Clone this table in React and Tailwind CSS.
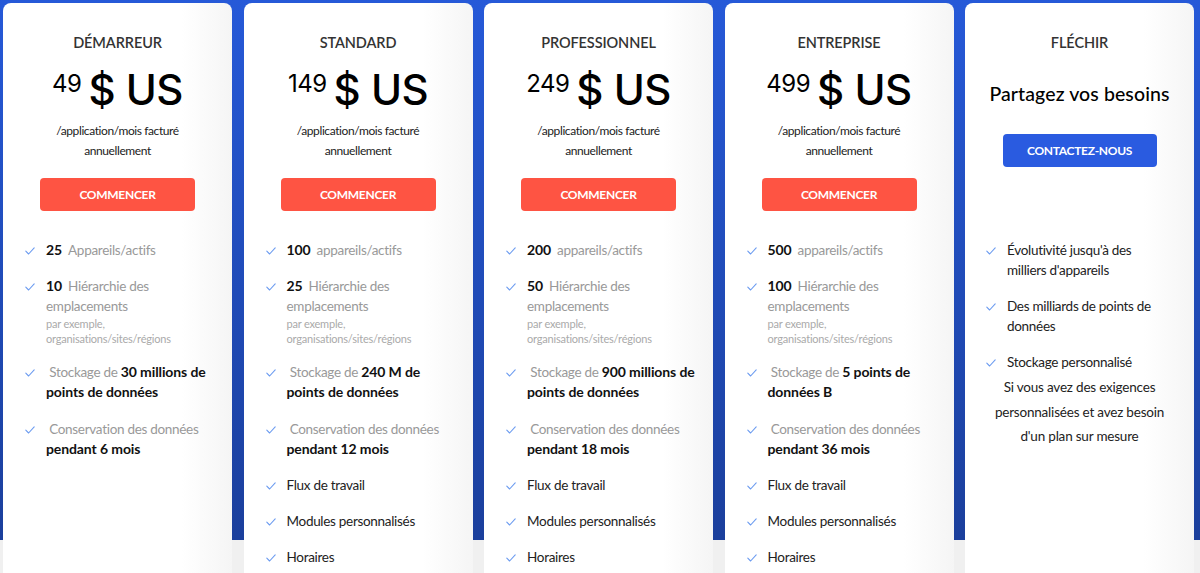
import React from "react";

const Check = () => (
  <svg width="10" height="8" viewBox="0 0 10 8" className="shrink-0 mt-[7px]" fill="none">
    <path d="M0.8 4.2 L3.6 7 L9.2 0.8" stroke="#6b9bf0" strokeWidth="1.1" strokeLinecap="round" strokeLinejoin="round" />
  </svg>
);

const Feature = ({ children }) => (
  <li className="flex gap-[11px] items-start">
    <Check />
    <div className="text-[13.5px] leading-[20px] tracking-[-0.3px]">{children}</div>
  </li>
);

const plans = [
  { name: "DÉMARREUR", price: "49", dev: "25", devLabel: "Appareils/actifs", loc: "10", stock: "30 millions de points de données", keep: "pendant 6 mois", extra: false },
  { name: "STANDARD", price: "149", dev: "100", devLabel: "appareils/actifs", loc: "25", stock: "240 M de points de données", keep: "pendant 12 mois", extra: true },
  { name: "PROFESSIONNEL", price: "249", dev: "200", devLabel: "appareils/actifs", loc: "50", stock: "900 millions de points de données", keep: "pendant 18 mois", extra: true },
  { name: "ENTREPRISE", price: "499", dev: "500", devLabel: "appareils/actifs", loc: "100", stock: "5 points de données B", keep: "pendant 36 mois", extra: true },
];

const cardCls =
  "w-[229px] shrink-0 rounded-t-[8px] bg-[linear-gradient(90deg,#ffffff_0%,#ffffff_78%,#f5f5f5_100%)] flex flex-col items-center pt-[30px]";

const Title = ({ children }) => (
  <div className="text-[14.5px] leading-[20px] font-semibold text-[#333] tracking-[-0.1px]">{children}</div>
);

const Bold = ({ children }) => (
  <span className="font-bold text-[#111] text-[14px] leading-[20px] tracking-[-0.1px]">{children}</span>
);

const PlanCard = ({ p }) => (
  <div className={cardCls}>
    <Title>{p.name}</Title>
    <div className="mt-[13px] flex items-start text-black leading-[48px]" style={{ fontFamily: "Inter, Lato, sans-serif" }}>
      <span className="text-[24px] leading-[30px] mt-[3px] mr-[7px] tracking-[-0.5px]">{p.price}</span>
      <span className="text-[42px] font-medium tracking-[-0.5px]">$ US</span>
    </div>
    <div className="mt-[7px] text-[12px] leading-[20px] tracking-[-0.4px] text-[#222] text-center w-[140px]">
      /application/mois facturé annuellement
    </div>
    <button className="mt-[17px] w-[155px] h-[33px] rounded-[4px] bg-[#fe5443] text-white text-[12px] font-bold tracking-[-0.3px]">
      COMMENCER
    </button>
    <ul className="mt-[29px] self-stretch pl-[22px] pr-[16px] flex flex-col gap-[16.2px]">
      <Feature>
        <span className="mr-[6px]"><Bold>{p.dev}</Bold></span>
        <span className="text-[#999]">{p.devLabel}</span>
      </Feature>
      <Feature>
        <span className="mr-[6px]"><Bold>{p.loc}</Bold></span>
        <span className="text-[#999]">Hiérarchie des emplacements</span>
        <div className="text-[11px] leading-[15px] tracking-[-0.2px] text-[#aaa]">par exemple, organisations/sites/régions</div>
      </Feature>
      <Feature>
        <span className="text-[#999]">{"\u00a0"}Stockage de </span>
        <Bold>{p.stock}</Bold>
      </Feature>
      <Feature>
        <span className="text-[#999]">{"\u00a0"}Conservation des données </span>
        <Bold>{p.keep}</Bold>
      </Feature>
      {p.extra && (
        <>
          <Feature><span className="text-[#222]">Flux de travail</span></Feature>
          <Feature><span className="text-[#222]">Modules personnalisés</span></Feature>
          <Feature><span className="text-[#222]">Horaires</span></Feature>
        </>
      )}
    </ul>
  </div>
);

export default function App() {
  return (
    <div
      className="h-[573px] w-[1200px] overflow-hidden bg-[linear-gradient(180deg,#2659d8_0px,#1b3f9c_540px,#f0f0f0_540px,#f0f0f0_100%)] pt-[3px] pl-[3px] flex gap-[11.5px] items-stretch"
      style={{ fontFamily: "Lato, 'Noto Sans', sans-serif" }}
    >
      {plans.map((p) => (
        <PlanCard key={p.name} p={p} />
      ))}
      <div className={cardCls}>
        <Title>FLÉCHIR</Title>
        <div className="mt-[29px] text-[19.5px] leading-[24px] font-medium text-black tracking-[0.1px]">Partagez vos besoins</div>
        <button className="mt-[28px] w-[154px] h-[33px] rounded-[4px] bg-[#2a5be0] text-white text-[12px] font-bold tracking-[-0.3px]">
          CONTACTEZ-NOUS
        </button>
        <ul className="mt-[73px] self-stretch pl-[21px] pr-[26px] flex flex-col gap-[16px]">
          <Feature><span className="text-[#222]">Évolutivité jusqu'à des milliers d'appareils</span></Feature>
          <Feature><span className="text-[#222]">Des milliards de points de données</span></Feature>
          <Feature><span className="text-[#222]">Stockage personnalisé</span></Feature>
        </ul>
        <p className="mt-[3px] px-[22px] text-center text-[13.5px] leading-[24.5px] tracking-[-0.2px] text-[#222]">
          Si vous avez des exigences personnalisées et avez besoin d'un plan sur mesure
        </p>
      </div>
    </div>
  );
}
